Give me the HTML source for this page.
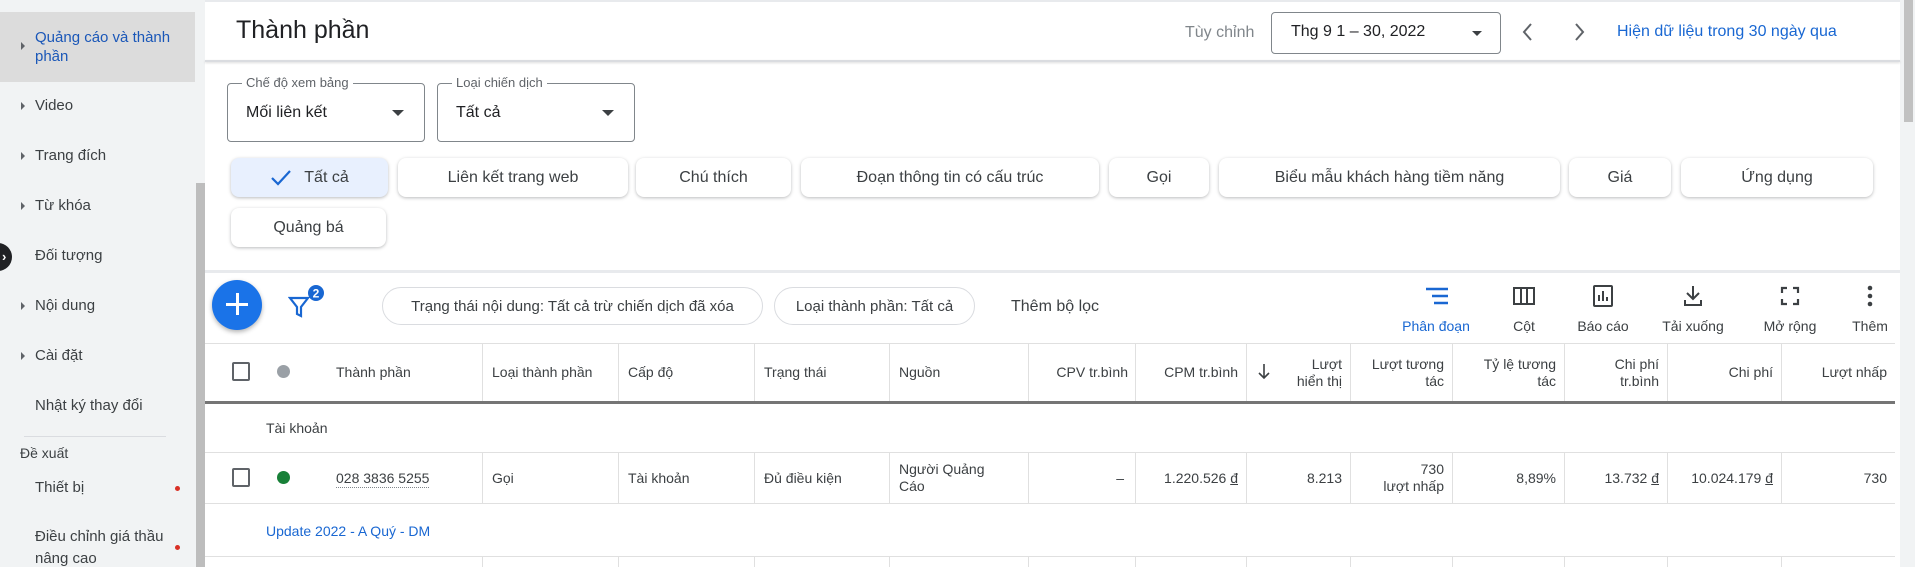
<!DOCTYPE html>
<html><head><meta charset="utf-8"><style>
*{box-sizing:border-box;margin:0;padding:0}
body{width:1915px;height:567px;overflow:hidden;background:#fff;font-family:"Liberation Sans","Noto Sans CJK SC",sans-serif;color:#3c4043;position:relative}
.a{position:absolute;white-space:nowrap}
.side{position:absolute;left:0;top:0;width:195px;height:567px;background:#f1f3f4}
.si{position:absolute;left:35px;font-size:15px;color:#3c4043}
.tri{position:absolute;left:21px;width:0;height:0;border-top:4px solid transparent;border-bottom:4px solid transparent;border-left:4px solid #5f6368}
.chip{position:absolute;height:39px;border-radius:8px;background:#fff;box-shadow:0 1px 3px rgba(60,64,67,.35);font-size:16px;color:#3c4043;display:flex;align-items:center;justify-content:center}
.sel{position:absolute;border:1px solid #80868b;border-radius:4px;height:59px;top:83px}
.sel .lb{position:absolute;top:-9px;left:14px;background:#fff;padding:0 4px;font-size:13px;color:#5f6368}
.sel .v{position:absolute;left:18px;top:20px;font-size:16px;color:#202124}
.dd{position:absolute;width:0;height:0;border-left:6px solid transparent;border-right:6px solid transparent;border-top:6px solid #3c4043}
.fc{position:absolute;top:287px;height:38px;border:1px solid #dadce0;border-radius:19px;font-size:15px;display:flex;align-items:center;justify-content:center;color:#3c4043}
.tb{position:absolute;top:318px;font-size:14px;color:#3c4043;transform:translateX(-50%)}
.vl{position:absolute;width:1px;background:#e0e0e0}
.hl{position:absolute;left:205px;width:1690px;height:1px;background:#e0e0e0}
.th{position:absolute;font-size:14px;color:#3c4043;line-height:17px}
.td{position:absolute;font-size:14px;color:#3c4043;line-height:17px}
.r{text-align:right}
</style></head><body>
<div class="side">
 <div class="a" style="left:0;top:12px;width:195px;height:70px;background:#dcdcdc"></div>
 <div class="tri" style="top:42px"></div>
 <div class="si" style="top:28px;color:#1a57b8;line-height:19px">Quảng cáo và thành<br>phần</div>
 <div class="tri" style="top:102px"></div><div class="si" style="top:97px">Video</div>
 <div class="tri" style="top:152px"></div><div class="si" style="top:147px">Trang đích</div>
 <div class="tri" style="top:202px"></div><div class="si" style="top:197px">Từ khóa</div>
 <div class="a" style="left:-16px;top:243px;width:28px;height:28px;border-radius:50%;background:#202124"></div>
 <div class="a" style="left:2px;top:249px;color:#fff;font-size:13px;font-weight:bold">›</div>
 <div class="si" style="top:247px">Đối tượng</div>
 <div class="tri" style="top:302px"></div><div class="si" style="top:297px">Nội dung</div>
 <div class="tri" style="top:352px"></div><div class="si" style="top:347px">Cài đặt</div>
 <div class="si" style="top:397px">Nhật ký thay đổi</div>
 <div class="a" style="left:24px;top:436px;width:142px;height:1px;background:#dadce0"></div>
 <div class="si" style="left:20px;top:445px;font-size:14px">Đề xuất</div>
 <div class="si" style="top:479px">Thiết bị</div>
 <div class="a" style="left:175px;top:486px;width:5px;height:5px;border-radius:50%;background:#d93025"></div>
 <div class="si" style="top:526px;line-height:22px;width:135px;overflow:hidden">Điều chỉnh giá thầu<br>nâng cao</div>
 <div class="a" style="left:175px;top:545px;width:5px;height:5px;border-radius:50%;background:#d93025"></div>
</div>
<div class="a" style="left:195px;top:0;width:10px;height:567px;background:#f1f3f4"></div>
<div class="a" style="left:196px;top:183px;width:9px;height:384px;background:#bdbdbd"></div>
<div class="a" style="left:1900px;top:0;width:15px;height:567px;background:#f1f3f4"></div>
<div class="a" style="left:1904px;top:0;width:9px;height:122px;background:#c1c1c1"></div>
<div class="a" style="left:205px;top:0;width:1695px;height:2px;background:#e8eaed"></div>
<div class="a" style="left:205px;top:60px;width:1695px;height:2px;background:#dadce0;box-shadow:0 1px 2px rgba(0,0,0,.15)"></div>
<div class="a" style="left:236px;top:16px;font-size:25px;color:#202124">Thành phần</div>
<div class="a" style="left:1185px;top:24px;font-size:16px;color:#80868b">Tùy chỉnh</div>
<div class="a" style="left:1271px;top:12px;width:230px;height:42px;border:1px solid #80868b;border-radius:4px"></div>
<div class="a" style="left:1291px;top:23px;font-size:16px;color:#202124">Thg 9 1 – 30, 2022</div>
<div class="dd" style="left:1472px;top:31px;border-width:5px 5px 0 5px"></div>
<svg class="a" style="left:1518px;top:20px" width="20" height="24"><path d="M13 4 L6 12 L13 20" stroke="#5f6368" stroke-width="2" fill="none"/></svg>
<svg class="a" style="left:1569px;top:20px" width="20" height="24"><path d="M7 4 L14 12 L7 20" stroke="#5f6368" stroke-width="2" fill="none"/></svg>
<div class="a" style="left:1617px;top:23px;font-size:16px;color:#1967d2">Hiện dữ liệu trong 30 ngày qua</div>
<div class="sel" style="left:227px;width:198px"><div class="lb">Chế độ xem bảng</div><div class="v">Mối liên kết</div><div class="dd" style="left:164px;top:26px"></div></div>
<div class="sel" style="left:437px;width:198px"><div class="lb">Loại chiến dịch</div><div class="v">Tất cả</div><div class="dd" style="left:164px;top:26px"></div></div>
<div class="chip" style="left:231px;top:158px;width:157px;background:#e8f0fe"><svg width="22" height="18" style="margin-right:12px"><path d="M2 9 L8 15 L20 2" stroke="#1967d2" stroke-width="2.2" fill="none"/></svg>Tất cả</div>
<div class="chip" style="left:398px;top:158px;width:230px">Liên kết trang web</div>
<div class="chip" style="left:636px;top:158px;width:155px">Chú thích</div>
<div class="chip" style="left:801px;top:158px;width:298px">Đoạn thông tin có cấu trúc</div>
<div class="chip" style="left:1109px;top:158px;width:100px">Gọi</div>
<div class="chip" style="left:1219px;top:158px;width:341px">Biểu mẫu khách hàng tiềm năng</div>
<div class="chip" style="left:1569px;top:158px;width:102px">Giá</div>
<div class="chip" style="left:1681px;top:158px;width:192px">Ứng dụng</div>
<div class="chip" style="left:231px;top:208px;width:155px">Quảng bá</div>
<div class="a" style="left:205px;top:270px;width:1695px;height:3px;background:#e8eaed"></div>
<div class="a" style="left:212px;top:280px;width:50px;height:50px;border-radius:50%;background:#1a73e8;box-shadow:0 2px 5px rgba(0,0,0,.3)"></div>
<div class="a" style="left:226px;top:303px;width:22px;height:3px;background:#fff"></div>
<div class="a" style="left:236px;top:293px;width:3px;height:22px;background:#fff"></div>
<svg class="a" style="left:288px;top:284px" width="40" height="36"><path d="M2 14 H20 L13 23 V32 L9 30 V23 Z" fill="none" stroke="#1967d2" stroke-width="2.2"/><circle cx="28" cy="9" r="8" fill="#1967d2"/><text x="28" y="13.5" font-size="12" font-weight="bold" text-anchor="middle" fill="#fff" font-family="Liberation Sans">2</text></svg>
<div class="fc" style="left:382px;width:381px">Trạng thái nội dung: Tất cả trừ chiến dịch đã xóa</div>
<div class="fc" style="left:774px;width:201px">Loại thành phần: Tất cả</div>
<div class="a" style="left:1011px;top:298px;font-size:16px">Thêm bộ lọc</div>
<svg class="a" style="left:1424px;top:286px" width="26" height="20"><path d="M2 3H24M8 10H24M10 17H24" stroke="#1967d2" stroke-width="2.4"/></svg>
<div class="tb" style="left:1436px;color:#1967d2">Phân đoạn</div>
<svg class="a" style="left:1512px;top:286px" width="24" height="20"><rect x="2" y="2" width="20" height="16" fill="none" stroke="#3c4043" stroke-width="2"/><path d="M9 2V18M15 2V18" stroke="#3c4043" stroke-width="2"/></svg>
<div class="tb" style="left:1524px">Cột</div>
<svg class="a" style="left:1592px;top:284px" width="22" height="24"><rect x="2" y="2" width="18" height="20" rx="1" fill="none" stroke="#3c4043" stroke-width="2"/><path d="M7 17V11M11 17V7M15 17V13" stroke="#3c4043" stroke-width="2"/></svg>
<div class="tb" style="left:1603px">Báo cáo</div>
<svg class="a" style="left:1682px;top:284px" width="22" height="24"><path d="M11 2V15M5 9L11 15L17 9M3 16V21H19V16" stroke="#3c4043" stroke-width="2" fill="none"/></svg>
<div class="tb" style="left:1693px">Tải xuống</div>
<svg class="a" style="left:1780px;top:286px" width="20" height="20"><path d="M2 7V2H7M13 2H18V7M18 13V18H13M7 18H2V13" stroke="#3c4043" stroke-width="2.2" fill="none"/></svg>
<div class="tb" style="left:1790px">Mở rộng</div>
<svg class="a" style="left:1866px;top:284px" width="8" height="24"><circle cx="4" cy="4" r="2.3" fill="#3c4043"/><circle cx="4" cy="12" r="2.3" fill="#3c4043"/><circle cx="4" cy="20" r="2.3" fill="#3c4043"/></svg>
<div class="tb" style="left:1870px">Thêm</div>
<div class="hl" style="top:343px"></div>
<div class="a" style="left:205px;top:401px;width:1690px;height:3px;background:#757575"></div>
<div class="hl" style="top:452px"></div>
<div class="hl" style="top:503px"></div>
<div class="hl" style="top:556px"></div>
<div class="vl" style="left:482px;top:344px;height:57px"></div><div class="vl" style="left:482px;top:452px;height:51px"></div><div class="vl" style="left:482px;top:556px;height:11px"></div>
<div class="vl" style="left:618px;top:344px;height:57px"></div><div class="vl" style="left:618px;top:452px;height:51px"></div><div class="vl" style="left:618px;top:556px;height:11px"></div>
<div class="vl" style="left:754px;top:344px;height:57px"></div><div class="vl" style="left:754px;top:452px;height:51px"></div><div class="vl" style="left:754px;top:556px;height:11px"></div>
<div class="vl" style="left:889px;top:344px;height:57px"></div><div class="vl" style="left:889px;top:452px;height:51px"></div><div class="vl" style="left:889px;top:556px;height:11px"></div>
<div class="vl" style="left:1028px;top:344px;height:57px"></div><div class="vl" style="left:1028px;top:452px;height:51px"></div><div class="vl" style="left:1028px;top:556px;height:11px"></div>
<div class="vl" style="left:1135px;top:344px;height:57px"></div><div class="vl" style="left:1135px;top:452px;height:51px"></div><div class="vl" style="left:1135px;top:556px;height:11px"></div>
<div class="vl" style="left:1246px;top:344px;height:57px"></div><div class="vl" style="left:1246px;top:452px;height:51px"></div><div class="vl" style="left:1246px;top:556px;height:11px"></div>
<div class="vl" style="left:1350px;top:344px;height:57px"></div><div class="vl" style="left:1350px;top:452px;height:51px"></div><div class="vl" style="left:1350px;top:556px;height:11px"></div>
<div class="vl" style="left:1452px;top:344px;height:57px"></div><div class="vl" style="left:1452px;top:452px;height:51px"></div><div class="vl" style="left:1452px;top:556px;height:11px"></div>
<div class="vl" style="left:1564px;top:344px;height:57px"></div><div class="vl" style="left:1564px;top:452px;height:51px"></div><div class="vl" style="left:1564px;top:556px;height:11px"></div>
<div class="vl" style="left:1667px;top:344px;height:57px"></div><div class="vl" style="left:1667px;top:452px;height:51px"></div><div class="vl" style="left:1667px;top:556px;height:11px"></div>
<div class="vl" style="left:1781px;top:344px;height:57px"></div><div class="vl" style="left:1781px;top:452px;height:51px"></div><div class="vl" style="left:1781px;top:556px;height:11px"></div>
<div class="a" style="left:232px;top:362px;width:18px;height:19px;border:2px solid #5f6368;border-radius:2px"></div>
<div class="a" style="left:277px;top:365px;width:13px;height:13px;border-radius:50%;background:#9aa0a6"></div>
<div class="th" style="left:336px;top:364px">Thành phần</div>
<div class="th" style="left:492px;top:364px">Loại thành phần</div>
<div class="th" style="left:628px;top:364px">Cấp độ</div>
<div class="th" style="left:764px;top:364px">Trạng thái</div>
<div class="th" style="left:899px;top:364px">Nguồn</div>
<div class="th r" style="left:1028px;width:100px;top:364px">CPV tr.bình</div>
<div class="th r" style="left:1135px;width:103px;top:364px">CPM tr.bình</div>
<svg class="a" style="left:1257px;top:362px" width="14" height="18"><path d="M7 2V16M2 11L7 16L12 11" stroke="#3c4043" stroke-width="1.6" fill="none"/></svg>
<div class="th r" style="left:1246px;width:96px;top:356px">Lượt<br>hiển thị</div>
<div class="th r" style="left:1350px;width:94px;top:356px">Lượt tương<br>tác</div>
<div class="th r" style="left:1452px;width:104px;top:356px">Tỷ lệ tương<br>tác</div>
<div class="th r" style="left:1564px;width:95px;top:356px">Chi phí<br>tr.bình</div>
<div class="th r" style="left:1667px;width:106px;top:364px">Chi phí</div>
<div class="th r" style="left:1781px;width:106px;top:364px">Lượt nhấp</div>
<div class="td" style="left:266px;top:420px">Tài khoản</div>
<div class="a" style="left:232px;top:468px;width:18px;height:19px;border:2px solid #5f6368;border-radius:2px"></div>
<div class="a" style="left:277px;top:471px;width:13px;height:13px;border-radius:50%;background:#188038"></div>
<div class="td" style="left:336px;top:470px;border-bottom:1px dotted #80868b">028 3836 5255</div>
<div class="td" style="left:492px;top:470px">Gọi</div>
<div class="td" style="left:628px;top:470px">Tài khoản</div>
<div class="td" style="left:764px;top:470px">Đủ điều kiện</div>
<div class="td" style="left:899px;top:461px">Người Quảng<br>Cáo</div>
<div class="td r" style="left:1028px;width:96px;top:470px">–</div>
<div class="td r" style="left:1135px;width:103px;top:470px">1.220.526 <u>đ</u></div>
<div class="td r" style="left:1246px;width:96px;top:470px">8.213</div>
<div class="td r" style="left:1350px;width:94px;top:461px">730<br>lượt nhấp</div>
<div class="td r" style="left:1452px;width:104px;top:470px">8,89%</div>
<div class="td r" style="left:1564px;width:95px;top:470px">13.732 <u>đ</u></div>
<div class="td r" style="left:1667px;width:106px;top:470px">10.024.179 <u>đ</u></div>
<div class="td r" style="left:1781px;width:106px;top:470px">730</div>
<div class="td" style="left:266px;top:523px;color:#1967d2">Update 2022 - A Quý - DM</div>
</body></html>
